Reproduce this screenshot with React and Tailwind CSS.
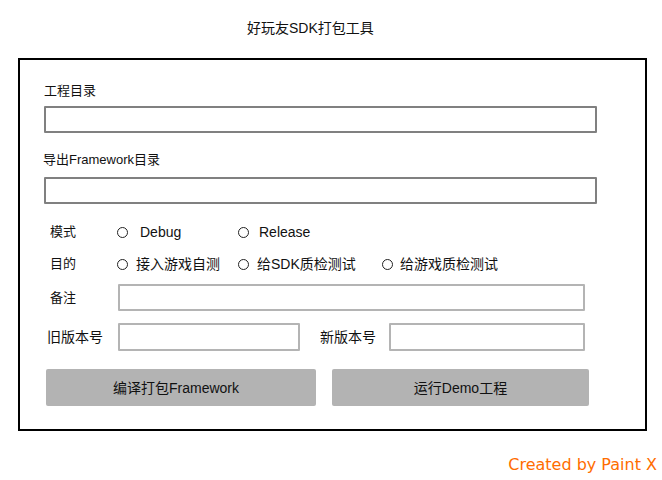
import React from "react";

const Radio = ({ label, gap = "gap-[8px]", className = "" }) => (
  <div className={`flex items-center text-[14px] ${gap} ${className}`}>
    <span className="h-[11px] w-[11px] shrink-0 rounded-full border border-[#222]" />
    <span className="whitespace-nowrap">{label}</span>
  </div>
);

const Field = ({ className = "" }) => (
  <div className={`h-[27px] rounded-[1px] border-2 border-[#808080] bg-white ${className}`} />
);

const LightField = ({ className = "" }) => (
  <div className={`rounded-[1px] border-2 border-[#b4b4b4] bg-white ${className}`} />
);

const App = () => {
  return (
    <div className="h-[480px] w-[662px] bg-white font-['Liberation_Sans','Noto_Sans_CJK_SC',sans-serif] text-[#111]">
      <div className="pl-[247px] pt-[20px] text-[14px] leading-[16px]">好玩友SDK打包工具</div>

      <div className="ml-[18px] mt-[22px] w-[629px] border-2 border-black pb-[23px] pl-[24px] pt-[23px] text-[13px] leading-[16px]">
        <div>工程目录</div>
        <Field className="mt-[7px] w-[553px]" />

        <div className="mt-[19px] -ml-[1px]">导出Framework目录</div>
        <Field className="mt-[9px] w-[553px]" />

        <div className="mt-[18px] flex h-[20px] items-center">
          <div className="w-[73px] pl-[6px]">模式</div>
          <Radio label="Debug" gap="gap-[12px]" className="w-[121px]" />
          <Radio label="Release" gap="gap-[10px]" />
        </div>

        <div className="mt-[12px] flex h-[20px] items-center">
          <div className="w-[73px] pl-[6px]">目的</div>
          <Radio label="接入游戏自测" className="w-[121px]" />
          <Radio label="给SDK质检测试" className="w-[144px]" />
          <Radio label="给游戏质检测试" gap="gap-[7px]" />
        </div>

        <div className="mt-[10px] flex items-center">
          <div className="w-[74px] pl-[6px]">备注</div>
          <LightField className="h-[27px] w-[467px]" />
        </div>

        <div className="mt-[12px] flex items-center text-[14px]">
          <div className="w-[74px] pl-[3px]">旧版本号</div>
          <LightField className="h-[28px] w-[182px]" />
          <div className="ml-[20px] w-[69px]">新版本号</div>
          <LightField className="h-[28px] w-[196px]" />
        </div>

        <div className="ml-[2px] mt-[18px] flex gap-[16px] text-[14px]">
          <button className="flex h-[37px] w-[270px] items-center justify-center rounded-[2px] bg-[#b3b3b3] pr-[10px]">
            编译打包Framework
          </button>
          <button className="flex h-[37px] w-[257px] items-center justify-center rounded-[2px] bg-[#b3b3b3]">
            运行Demo工程
          </button>
        </div>
      </div>

      <div className="mt-[24px] flex justify-end pr-[5px] font-['DejaVu_Sans',sans-serif] text-[16px] leading-[19px] text-[#ff6d00]">
        Created by Paint X
      </div>
    </div>
  );
};

export default App;
